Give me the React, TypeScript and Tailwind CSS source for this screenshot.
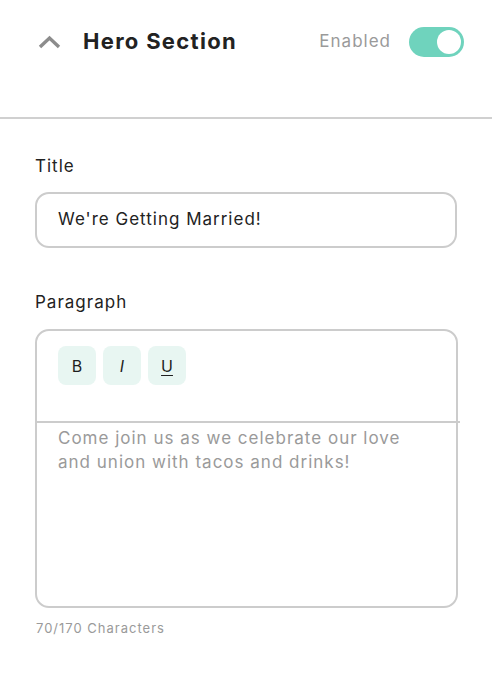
import React from "react";

export default function App() {
  const font = { fontFamily: "Inter, 'Noto Sans', sans-serif" };
  return (
    <div className="w-[492px] h-[682px] bg-white text-[#222222]" style={font}>
      <div className="flex items-center h-[83px] pl-[38px] pr-[28px]">
        <svg width="23" height="14" viewBox="0 0 23 14" className="shrink-0">
          <path d="M2 12 L11.5 3 L21 12" fill="none" stroke="#8c8c8c" strokeWidth="3.4" />
        </svg>
        <div className="ml-[22px] text-[22px] font-bold tracking-[1.3px]">Hero Section</div>
        <div className="ml-auto text-[17px] text-[#9a9a9a] tracking-[1px]">Enabled</div>
        <div className="ml-[18px] w-[55px] h-[30px] rounded-full bg-[#6fd3bd] flex items-center justify-end pr-[3px]">
          <div className="w-[24px] h-[24px] rounded-full bg-white" />
        </div>
      </div>
      <div className="mt-[34px] h-[2px] bg-[#d0d0d0]" />
      <div className="px-[35px] pt-[35px] tracking-[1px]">
        <div className="text-[17px] leading-[24px]">Title</div>
        <div className="mt-[14px] h-[56px] rounded-[14px] border-2 border-[#cccccc] flex items-center pl-[21px] text-[17px] text-[#222222]">
          We're Getting Married!
        </div>
        <div className="mt-[42px] text-[17px] leading-[24px]">Paragraph</div>
        <div className="mt-[15px] h-[279px] w-[423px] rounded-[14px] border-2 border-[#cccccc] flex flex-col">
          <div className="h-[90px] flex items-start pt-[15px] pl-[21px] gap-[7px] tracking-normal">
            <div className="w-[38px] h-[39px] rounded-[8px] bg-[#e8f6f2] flex items-center justify-center text-[16px] text-[#1e1e1e]">B</div>
            <div className="w-[38px] h-[39px] rounded-[8px] bg-[#e8f6f2] flex items-center justify-center text-[16px] italic text-[#1e1e1e]">I</div>
            <div className="w-[38px] h-[39px] rounded-[8px] bg-[#e8f6f2] flex items-center justify-center text-[16px] underline underline-offset-[3px] text-[#1e1e1e]">U</div>
          </div>
          <div className="h-[2px] bg-[#cccccc] -mr-[4px]" />
          <div className="pl-[21px] pr-[10px] pt-[3px] text-[17px] leading-[24px] text-[#9a9a9a] whitespace-nowrap">
            Come join us as we celebrate our love<br />and union with tacos and drinks!
          </div>
        </div>
        <div className="mt-[11px] pl-[1px] text-[13px] text-[#9a9a9a] tracking-[1px]">70/170 Characters</div>
      </div>
    </div>
  );
}
